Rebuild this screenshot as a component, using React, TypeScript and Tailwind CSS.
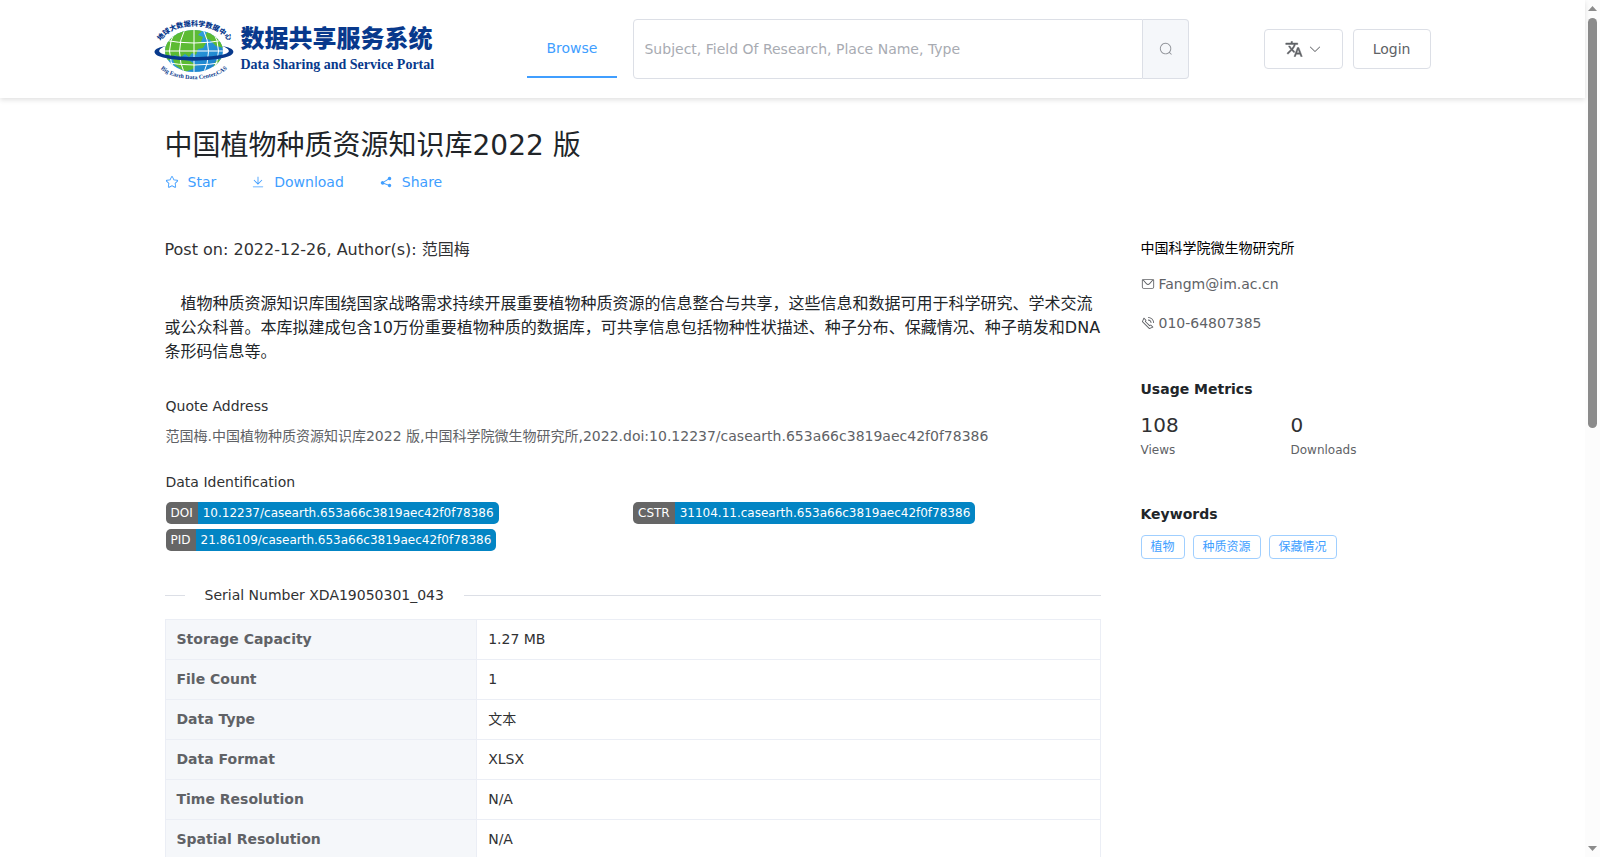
import React from 'react';

const ICONS = {
  search:
    'm795.904 750.72 124.992 124.928a32 32 0 0 1-45.248 45.248L750.656 795.904a416 416 0 1 1 45.248-45.248zM480 832a352 352 0 1 0 0-704 352 352 0 0 0 0 704z',
  star: 'm512 747.84 228.16 119.936a6.4 6.4 0 0 0 9.28-6.72l-43.52-254.08 184.512-179.904a6.4 6.4 0 0 0-3.52-10.88l-255.104-37.12L517.76 147.904a6.4 6.4 0 0 0-11.52 0L392.192 379.072l-255.104 37.12a6.4 6.4 0 0 0-3.52 10.88L318.08 606.976l-43.584 254.08a6.4 6.4 0 0 0 9.28 6.72L512 747.84zM313.6 924.48a70.4 70.4 0 0 1-102.144-74.24l37.888-220.928L88.96 472.96A70.4 70.4 0 0 1 128 352.896l221.76-32.256 99.2-200.96a70.4 70.4 0 0 1 126.208 0l99.2 200.96 221.824 32.256a70.4 70.4 0 0 1 39.04 120.064L774.72 629.376l37.888 220.928a70.4 70.4 0 0 1-102.144 74.24L512 820.096l-198.4 104.32z',
  download:
    'M160 832h704a32 32 0 1 1 0 64H160a32 32 0 1 1 0-64zm384-253.696 236.288-236.352 45.248 45.248L508.8 704 192 387.2l45.248-45.248L480 584.704V128h64v450.304z',
  share:
    'm679.872 348.8-301.76 188.608a127.808 127.808 0 0 1 5.12 52.16l279.936 104.96a128 128 0 1 1-22.464 59.904l-279.872-104.96a128 128 0 1 1-16.64-166.272l301.696-188.608a128 128 0 1 1 33.92 54.272z',
  message:
    'M128 224v512a64 64 0 0 0 64 64h640a64 64 0 0 0 64-64V224H128zm0-64h768a64 64 0 0 1 64 64v512a128 128 0 0 1-128 128H192A128 128 0 0 1 64 736V224a64 64 0 0 1 64-64z M904 224 656.512 506.88a192 192 0 0 1-289.024 0L120 224h784zm-698.944 0 210.56 240.704a128 128 0 0 0 192.704 0L818.944 224H205.056z',
  phone:
    'M79.36 432.256 591.744 944.64a32 32 0 0 0 35.2 6.784l253.44-108.544a32 32 0 0 0 9.984-52.032l-153.856-153.92a32 32 0 0 0-36.928-6.016l-69.888 34.944L358.08 394.24l35.008-69.888a32 32 0 0 0-5.952-36.928L233.152 133.568a32 32 0 0 0-52.032 10.048L72.512 397.056a32 32 0 0 0 6.784 35.2zm60.48-29.952 81.536-190.08L325.568 316.48l-24.64 49.216-20.608 41.216 32.576 32.64 271.552 271.552 32.64 32.64 41.216-20.672 49.28-24.576 104.192 104.128-190.08 81.472L139.84 402.304zM512 320v-64a256 256 0 0 1 256 256h-64a192 192 0 0 0-192-192zm0-192V64a448 448 0 0 1 448 448h-64a384 384 0 0 0-384-384z',
  arrowDown:
    'M831.872 340.864 512 652.672 192.128 340.864a30.592 30.592 0 0 0-42.752 0 29.12 29.12 0 0 0 0 41.6L489.664 714.24a32 32 0 0 0 44.672 0l340.288-331.712a29.12 29.12 0 0 0 0-41.728 30.592 30.592 0 0 0-42.752 0z',
};

const ACTIONS: { label: string; icon: keyof typeof ICONS }[] = [
  { label: 'Star', icon: 'star' },
  { label: 'Download', icon: 'download' },
  { label: 'Share', icon: 'share' },
];

const IDENTIFIERS = [
  { label: 'DOI', value: '10.12237/casearth.653a66c3819aec42f0f78386' },
  { label: 'CSTR', value: '31104.11.casearth.653a66c3819aec42f0f78386' },
  { label: 'PID', value: '21.86109/casearth.653a66c3819aec42f0f78386' },
];

const DETAILS = [
  ['Storage Capacity', '1.27 MB'],
  ['File Count', '1'],
  ['Data Type', '文本'],
  ['Data Format', 'XLSX'],
  ['Time Resolution', 'N/A'],
  ['Spatial Resolution', 'N/A'],
];

const KEYWORDS = ['植物', '种质资源', '保藏情况'];

function Icon({ name, className = 'size-3.5' }: { name: keyof typeof ICONS; className?: string }) {
  return (
    <svg viewBox="0 0 1024 1024" fill="currentColor" aria-hidden="true" className={`shrink-0 ${className}`}>
      <path d={ICONS[name]} />
    </svg>
  );
}

function Globe() {
  return (
    <svg viewBox="0 0 78 64" className="h-16 w-[78px] shrink-0 overflow-visible" aria-hidden="true">
      <defs>
        <linearGradient id="sea" x1="0" x2="1" y1="0" y2="1">
          <stop offset="0" stopColor="#3fb3e6" />
          <stop offset="1" stopColor="#1478c8" />
        </linearGradient>
        <clipPath id="ball">
          <ellipse cx="39" cy="34" rx="29" ry="21" />
        </clipPath>
        <path id="arc-top" d="M4 27 C15 3 63 3 75 27" />
        <path id="arc-bottom" d="M5 51 C20 66 58 66 73 51" />
      </defs>
      <g clipPath="url(#ball)">
        <rect x="9" y="12" width="60" height="46" fill="url(#sea)" />
        <path
          d="M11 44 8 26 21 13l18-2 8 3-4 4 5 2-2 5 5 1-3 5-5 1-2 6-4-2-3 4-4-3-5 4-5-3-5 5zM53 12l11 8 5 11-8-2-6-6-5-2zM17 40l10 2 8 2 6 4-3 4-8 3-10-7zM61 44l6-3-4 10-6 1z"
          fill="#5cbb33"
        />
        <path
          d="M8 23q31 6 62 0M8 34h62M8 45q31 6 62 0M39 12v46M30 12q-11 22 0 46M48 12q11 22 0 46M21 13q-13 21 0 42M57 13q13 21 0 42"
          fill="none"
          stroke="#fff"
          strokeWidth="1"
        />
      </g>
      <path
        d="M11 29C-3 31-3 37 5 39.500c15 5.500 53 5.500 68 0C81 37 81 31 67 29c8 3 9 6 3 8-13 4-49 4-62 0-6-2-5-5 3-8z"
        fill="#08398c"
      />
      <text className="fill-[#08398c] font-['Noto_Sans_CJK_SC',sans-serif] text-[7px] font-black">
        <textPath href="#arc-top" startOffset="50%" textAnchor="middle">
          地球大数据科学数据中心
        </textPath>
      </text>
      <text className="fill-[#08398c] font-['Liberation_Serif',serif] text-[6px] font-bold">
        <textPath href="#arc-bottom" startOffset="50%" textAnchor="middle">
          Big Earth Data Center,CAS
        </textPath>
      </text>
    </svg>
  );
}

function Header() {
  return (
    <header className="relative bg-white shadow-[0_2px_5px_rgba(0,0,0,0.12)]">
      <div className="mx-auto flex h-[98px] max-w-[1276px] items-center">
        <a href="#home" className="flex items-center gap-2 text-[#08398c]">
          <Globe />
          <span className="flex w-[200px] flex-col pt-1">
            <span className="font-['Noto_Sans_CJK_SC',sans-serif] text-2xl leading-7 font-black whitespace-nowrap">
              数据共享服务系统
            </span>
            <span className="font-['Liberation_Serif',serif] text-sm leading-7 font-bold whitespace-nowrap">
              Data Sharing and Service Portal
            </span>
          </span>
        </a>
        <nav className="mr-4 ml-[86px]">
          <a
            href="#browse"
            className="flex h-[58px] items-center border-b-2 border-[#409eff] px-5 text-[#409eff]"
          >
            Browse
          </a>
        </nav>
        <form className="flex h-[60px] max-w-[556px] flex-1" onSubmit={(e) => e.preventDefault()}>
          <input
            type="text"
            aria-label="Search"
            placeholder="Subject, Field Of Research, Place Name, Type"
            className="min-w-0 flex-1 rounded-l-sm border border-[#dcdfe6] px-2.5 text-[#606266] placeholder:text-[#a8abb2]"
          />
          <button
            type="submit"
            aria-label="Submit search"
            className="flex w-[46px] items-center justify-center rounded-r-sm border border-l-0 border-[#dcdfe6] bg-[#f5f7fa] text-[#909399]"
          >
            <Icon name="search" />
          </button>
        </form>
        <div className="ml-auto flex gap-2.5 text-[#606266]">
          <button
            type="button"
            aria-label="Language"
            className="flex h-10 items-center gap-[5px] rounded border border-[#dcdfe6] px-5"
          >
            <svg
              viewBox="0 0 24 24"
              fill="currentColor"
              stroke="currentColor"
              strokeWidth="0.6"
              aria-hidden="true"
              className="size-[18px]"
            >
              <path d="m12.87 15.07-2.54-2.51.03-.03A17.52 17.52 0 0 0 14.07 6H17V4h-7V2H8v2H1v1.99h11.17C11.5 7.92 10.44 9.75 9 11.35 8.07 10.32 7.3 9.19 6.69 8h-2c.73 1.63 1.73 3.17 2.98 4.56l-5.09 5.02L4 19l5-5 3.11 3.11zM18.5 10h-2L12 22h2l1.12-3h4.75L21 22h2zm-2.62 7 1.62-4.33L19.12 17z" />
            </svg>
            <Icon name="arrowDown" />
          </button>
          <button type="button" className="h-10 rounded border border-[#dcdfe6] px-[19px]">
            Login
          </button>
        </div>
      </div>
    </header>
  );
}

function Sidebar() {
  return (
    <aside>
      <h2 className="text-black">中国科学院微生物研究所</h2>
      <a href="mailto:Fangm@im.ac.cn" className="mt-4 flex items-center gap-1 text-[#606266]">
        <Icon name="message" />
        Fangm@im.ac.cn
      </a>
      <a href="tel:010-64807385" className="mt-[19px] flex items-center gap-1 text-[#606266]">
        <Icon name="phone" />
        010-64807385
      </a>

      <h3 className="mt-[46px] font-bold text-[#212529]">Usage Metrics</h3>
      <dl className="mt-3 flex">
        <div className="flex w-[150px] flex-col-reverse">
          <dt className="text-xs leading-[22px] text-[#606266]">Views</dt>
          <dd className="text-xl text-[#303133]">108</dd>
        </div>
        <div className="flex flex-col-reverse">
          <dt className="text-xs leading-[22px] text-[#606266]">Downloads</dt>
          <dd className="text-xl text-[#303133]">0</dd>
        </div>
      </dl>

      <h3 className="mt-[43px] font-bold text-[#212529]">Keywords</h3>
      <ul className="mt-[11px] flex gap-2 text-xs text-[#409eff]">
        {KEYWORDS.map((word) => (
          <li key={word} className="flex h-6 items-center rounded border border-[#a0cfff] px-[9px]">
            {word}
          </li>
        ))}
      </ul>
    </aside>
  );
}

/* Vertical scroll track with its thumb */
function ScrollTrack() {
  return (
    <div className="flex w-[15px] shrink-0 flex-col items-center justify-between bg-[#fcfcfc] py-1.5" aria-hidden="true">
      <svg viewBox="0 0 9 5" className="h-[5px] w-[9px]" fill="#8b8b8b">
        <path d="M0 5 4.500 0 9 5z" />
      </svg>
      <div className="mt-[7px] w-[9px] grow-[49] basis-0 rounded-full bg-[#8b8b8b]" />
      <div className="grow-[50] basis-0" />
      <svg viewBox="0 0 9 5" className="h-[5px] w-[9px]" fill="#8b8b8b">
        <path d="M0 0h9L4.500 5z" />
      </svg>
    </div>
  );
}

export default function App() {
  return (
    <div className="flex h-screen overflow-hidden bg-white font-['DejaVu_Sans','Noto_Sans_CJK_SC',sans-serif] text-sm text-[#303133]">
      <div className="min-w-0 flex-1">
        <Header />
        <main className="mx-auto max-w-[1256px] pt-[26px]">
          <h1 className="text-[28px] leading-11 text-[#212529]">中国植物种质资源知识库2022 版</h1>
          <div className="mt-1 flex gap-[35px] text-[#409eff]">
            {ACTIONS.map((action) => (
              <button key={action.label} type="button" className="flex items-center gap-[9px]">
                <Icon name={action.icon} />
                {action.label}
              </button>
            ))}
          </div>

          <div className="mt-[46px] grid grid-cols-[1fr_280px] gap-10">
            <div className="min-w-0">
              <p className="text-base">Post on: 2022-12-26, Author(s): 范国梅</p>
              <p className="mt-[30px] indent-4 text-base text-[#212529]">
                植物种质资源知识库围绕国家战略需求持续开展重要植物种质资源的信息整合与共享，这些信息和数据可用于科学研究、学术交流或公众科普。本库拟建成包含10万份重要植物种质的数据库，可共享信息包括物种性状描述、种子分布、保藏情况、种子萌发和DNA条形码信息等。
              </p>

              <section className="pl-px">
                <h2 className="mt-8">Quote Address</h2>
                <p className="mt-2.5 text-[#606266]">
                  范国梅.中国植物种质资源知识库2022 版,中国科学院微生物研究所,2022.doi:10.12237/casearth.653a66c3819aec42f0f78386
                </p>

                <h2 className="mt-[26px]">Data Identification</h2>
                <ul className="mt-2.5 grid grid-cols-2 gap-y-[5px] text-xs text-white">
                  {IDENTIFIERS.map((id) => (
                    <li key={id.label} className="flex h-[22px] items-stretch">
                      <span className="flex items-center rounded-l-[5px] bg-[#666] px-[5px]">{id.label}</span>
                      <span className="flex items-center rounded-r-[5px] bg-[#0385c4] px-[5px]">{id.value}</span>
                    </li>
                  ))}
                </ul>
              </section>

              <div className="mt-8 flex items-center gap-5">
                <span className="h-px w-5 bg-[#dcdfe6]" />
                <h2 className="leading-6">Serial Number XDA19050301_043</h2>
                <span className="h-px flex-1 bg-[#dcdfe6]" />
              </div>

              <table className="mt-3 w-full table-fixed border-collapse">
                <tbody>
                  {DETAILS.map(([label, value]) => (
                    <tr key={label} className="h-10">
                      <th
                        scope="row"
                        className="w-1/3 border border-[#ebeef5] bg-[#f5f7fa] px-[11px] pb-0.5 text-left font-bold text-[#606266]"
                      >
                        {label}
                      </th>
                      <td className="border border-[#ebeef5] px-[11px] pb-0.5">{value}</td>
                    </tr>
                  ))}
                </tbody>
              </table>
            </div>
            <Sidebar />
          </div>
        </main>
      </div>
      <ScrollTrack />
    </div>
  );
}
